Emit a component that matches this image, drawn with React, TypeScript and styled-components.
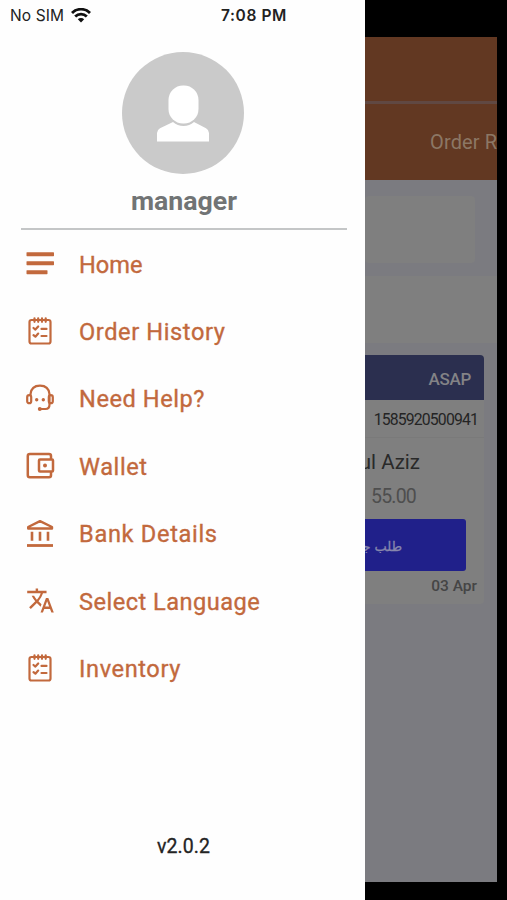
import React from "react";
import styled, { createGlobalStyle } from "styled-components";
import { MdTranslate } from "react-icons/md";

const GlobalStyle = createGlobalStyle`
  * { box-sizing: border-box; }
  body { margin: 0; background: #000; font-family: Roboto, "Liberation Sans", sans-serif; }
`;

const orange = "#c2693d";

const Screen = styled.div`
  display: flex;
  width: 507px;
  height: 900px;
  background: #000;
  overflow: hidden;
`;

const Drawer = styled.aside`
  display: flex;
  flex-direction: column;
  flex: none;
  width: 365px;
  height: 900px;
  background: #fefefe;
`;

const StatusBar = styled.div`
  display: flex;
  align-items: center;
  height: 30px;
  padding-left: 10px;
  font-family: Inter, "Liberation Sans", sans-serif;
  color: #222;
  white-space: nowrap;
`;

const Carrier = styled.span`
  width: 61px;
  font-size: 15.5px;
  letter-spacing: 0.1px;
`;

const Clock = styled.span`
  margin-left: 130px;
  font-size: 15.5px;
  font-weight: 600;
  letter-spacing: 0.6px;
`;

const Profile = styled.header`
  display: flex;
  flex-direction: column;
  align-items: center;
  height: 200px;
  margin: 0 18px 1px 21px;
  padding-top: 22px;
  border-bottom: 2px solid #c4c6c7;
`;

const Avatar = styled.div`
  display: flex;
  width: 122px;
  height: 122px;
  margin-right: 2px;
  border-radius: 50%;
  background: #cacaca;
`;

const UserName = styled.h1`
  margin: 10px 0 0;
  font-size: 26.7px;
  line-height: 34px;
  font-weight: 700;
  color: #717475;
`;

const Menu = styled.nav`
  display: flex;
  flex-direction: column;
`;

const MenuItem = styled.a`
  display: flex;
  align-items: center;
  height: 67.4px;
  padding-left: 25px;
  color: ${orange};
`;

const IconBox = styled.span`
  display: flex;
  align-items: center;
  justify-content: center;
  width: 30px;
  height: 30px;
  margin-right: 24px;
  margin-top: -3px;
`;

const Label = styled.span<{ $tracking: number }>`
  font-size: 23.6px;
  font-weight: 400;
  line-height: 28px;
  letter-spacing: ${(p) => p.$tracking}px;
  -webkit-text-stroke: 0.35px ${orange};
  white-space: nowrap;
`;

const Version = styled.footer`
  margin-top: 132px;
  padding-left: 2px;
  font-size: 19.5px;
  font-weight: 400;
  -webkit-text-stroke: 0.3px #242424;
  letter-spacing: 0.1px;
  line-height: 24px;
  text-align: center;
  color: #242424;
`;

const Backdrop = styled.main`
  display: flex;
  flex-direction: column;
  width: 132px;
  height: 845px;
  margin-top: 37px;
  background: #7b7b80;
  overflow: hidden;
  white-space: nowrap;
`;

const TopBar = styled.div`
  height: 67px;
  flex: none;
  background: #623822;
  border-bottom: 3px solid #604842;
`;

const Tabs = styled.div`
  display: flex;
  align-items: center;
  flex: none;
  height: 76px;
  padding-left: 65px;
  background: #623822;
  color: #8c7765;
  font-size: 20px;
  letter-spacing: 0.15px;
`;

const SearchPanel = styled.div`
  flex: none;
  width: 110px;
  height: 67px;
  margin-top: 16px;
  border-radius: 4px;
  background: #7f7f7f;
`;

const FilterBand = styled.div`
  flex: none;
  height: 67px;
  margin-top: 13px;
  background: #7f7f7f;
`;

const OrderCard = styled.section`
  display: flex;
  flex-direction: column;
  align-items: flex-end;
  flex: none;
  width: 119px;
  height: 249px;
  margin-top: 12px;
  border-radius: 0 4px 4px 0;
  background: #7f7f7f;
  overflow: hidden;
`;

const CardHeader = styled.div`
  display: flex;
  align-items: center;
  justify-content: flex-end;
  width: 100%;
  height: 45px;
  padding: 2px 13px 0 0;
  background: #2b2f4f;
  color: #838386;
  font-size: 17px;
  font-weight: 500;
  letter-spacing: -0.3px;
`;

const OrderNumber = styled.div`
  display: flex;
  align-items: center;
  justify-content: flex-end;
  width: 100%;
  height: 38px;
  padding: 2px 6px 0 0;
  border-bottom: 1px solid #7a7a7a;
  color: #242424;
  font-size: 15.8px;
  letter-spacing: -0.85px;
`;

const Customer = styled.div`
  margin: 11px 64px 0 0;
  color: #292929;
  font-size: 20.5px;
  line-height: 26px;
`;

const Price = styled.div`
  margin: 9px 68px 0 0;
  color: #4e4e4e;
  font-size: 19.5px;
  line-height: 26px;
  letter-spacing: -0.8px;
`;

const ActionButton = styled.div`
  display: flex;
  align-items: center;
  justify-content: flex-end;
  width: 101px;
  height: 52px;
  margin: 9px 18px 0 0;
  padding: 3px 64px 0 0;
  border-radius: 0 3px 3px 0;
  background: #20208a;
  color: #8787ad;
  font-family: "DejaVu Sans", sans-serif;
  font-size: 13px;
  -webkit-text-stroke: 0.3px #8787ad;
`;

const DateLabel = styled.div`
  margin: 5px 7px 0 0;
  color: #454545;
  font-size: 15.5px;
  font-weight: 500;
  line-height: 20px;
`;

const WifiIcon = () => (
  <svg width="20" height="15" viewBox="0 0 20 15" fill="none" stroke="#111" strokeWidth="2.800">
    <path d="M1 5a12.600 12.600 0 0 1 18 0" />
    <path d="M4.200 8.600a8.200 8.200 0 0 1 11.600 0" />
    <path d="M10 14.500 6.800 11.300a4.600 4.600 0 0 1 6.400 0z" fill="#111" stroke="none" />
  </svg>
);

const PersonIcon = () => (
  <svg width="122" height="122" viewBox="0 0 122 122" fill="#fff">
    <rect x="46.500" y="33.500" width="30" height="38" rx="14.500" />
    <path d="M35 89.500V81q0-3 3-4.700l13-6.300q4.500 4 10.500 4t10.500-4l12 6.300q3 1.700 3 4.700v8.500z" />
  </svg>
);

const HomeIcon = () => (
  <svg width="30" height="30" viewBox="0 0 30 30" fill="currentColor">
    <rect x="1.500" y="4.200" width="27.500" height="4" rx=".6" />
    <rect x="1.500" y="13.200" width="27.500" height="4" rx=".6" />
    <rect x="1.500" y="22.200" width="21" height="4" rx=".6" />
  </svg>
);

const ChecklistIcon = () => (
  <svg width="30" height="30" viewBox="0 0 30 30" fill="none" stroke="currentColor" strokeWidth="2.200" strokeLinecap="round" strokeLinejoin="round">
    <rect x="4.500" y="4" width="21" height="23.500" rx="2" />
    <path d="M9.500 2.300v3.500M13.200 2.300v3.500M17 2.300v3.500M20.700 2.300v3.500M8.500 12l1.900 1.600 2.800-3.100M8.500 19.100l1.900 1.600 2.800-3.100M16.500 12.900h5M16.500 20h5" />
  </svg>
);

const SupportIcon = () => (
  <svg width="30" height="30" viewBox="0 0 30 30" fill="none" stroke="currentColor" strokeWidth="2.200" strokeLinecap="round">
    <path d="M5.500 12v-.8C6 5.800 9.500 2.700 15 2.700s9 3.100 9.500 8.500V21.500c0 3-1.500 4.500-4 4.500h-5" />
    <rect x="2.200" y="12.200" width="4" height="8" rx="2" />
    <rect x="23.800" y="12.200" width="4" height="8" rx="2" />
    <circle cx="14.800" cy="26" r="2" fill="currentColor" stroke="none" />
    <path d="M11.700 16.700h.01M18.300 16.700h.01" strokeWidth="3.400" />
  </svg>
);

const WalletIcon = () => (
  <svg width="30" height="30" viewBox="0 0 30 30" fill="none" stroke="currentColor" strokeWidth="2.500" strokeLinejoin="round">
    <path d="M26 9.500V6q0-2-2-2H4.800q-2 0-2 2v19.200q0 2 2 2H24q2 0 2-2V21.500" />
    <rect x="14" y="9.500" width="14" height="12" rx="1" />
    <circle cx="20" cy="15.500" r="2" fill="currentColor" stroke="none" />
  </svg>
);

const BankIcon = () => (
  <svg width="30" height="30" viewBox="0 0 30 30" fill="none" stroke="currentColor" strokeWidth="2.400" strokeLinejoin="round">
    <path d="M3.200 10.500V9L15 3.200 27 9v1.500z" />
    <path d="M7 13.800v9M15 13.800v9M23 13.800v9" strokeWidth="2.600" />
    <path d="M2 27.500h26" strokeWidth="2.800" />
  </svg>
);

const LanguageIcon = () => <MdTranslate size={29} />;

const items = [
  { label: "Home", tracking: 0, Icon: HomeIcon },
  { label: "Order History", tracking: 0.6, Icon: ChecklistIcon },
  { label: "Need Help?", tracking: 0.55, Icon: SupportIcon },
  { label: "Wallet", tracking: 0.6, Icon: WalletIcon },
  { label: "Bank Details", tracking: 0.68, Icon: BankIcon },
  { label: "Select Language", tracking: 0.47, Icon: LanguageIcon },
  { label: "Inventory", tracking: 0.6, Icon: ChecklistIcon },
];

export default function App() {
  return (
    <>
      <GlobalStyle />
      <Screen>
        <Drawer>
          <StatusBar>
            <Carrier>No SIM</Carrier>
            <WifiIcon />
            <Clock>7:08 PM</Clock>
          </StatusBar>
          <Profile>
            <Avatar><PersonIcon /></Avatar>
            <UserName>manager</UserName>
          </Profile>
          <Menu>
            {items.map(({ label, tracking, Icon }) => (
              <MenuItem key={label}>
                <IconBox><Icon /></IconBox>
                <Label $tracking={tracking}>{label}</Label>
              </MenuItem>
            ))}
          </Menu>
          <Version>v2.0.2</Version>
        </Drawer>
        <Backdrop>
          <TopBar />
          <Tabs>Order R</Tabs>
          <SearchPanel />
          <FilterBand />
          <OrderCard>
            <CardHeader>ASAP</CardHeader>
            <OrderNumber>1585920500941</OrderNumber>
            <Customer>ul Aziz</Customer>
            <Price>55.00</Price>
            <ActionButton><span dir="rtl">{"طلب ج\u200d"}</span></ActionButton>
            <DateLabel>03 Apr</DateLabel>
          </OrderCard>
        </Backdrop>
      </Screen>
    </>
  );
}
